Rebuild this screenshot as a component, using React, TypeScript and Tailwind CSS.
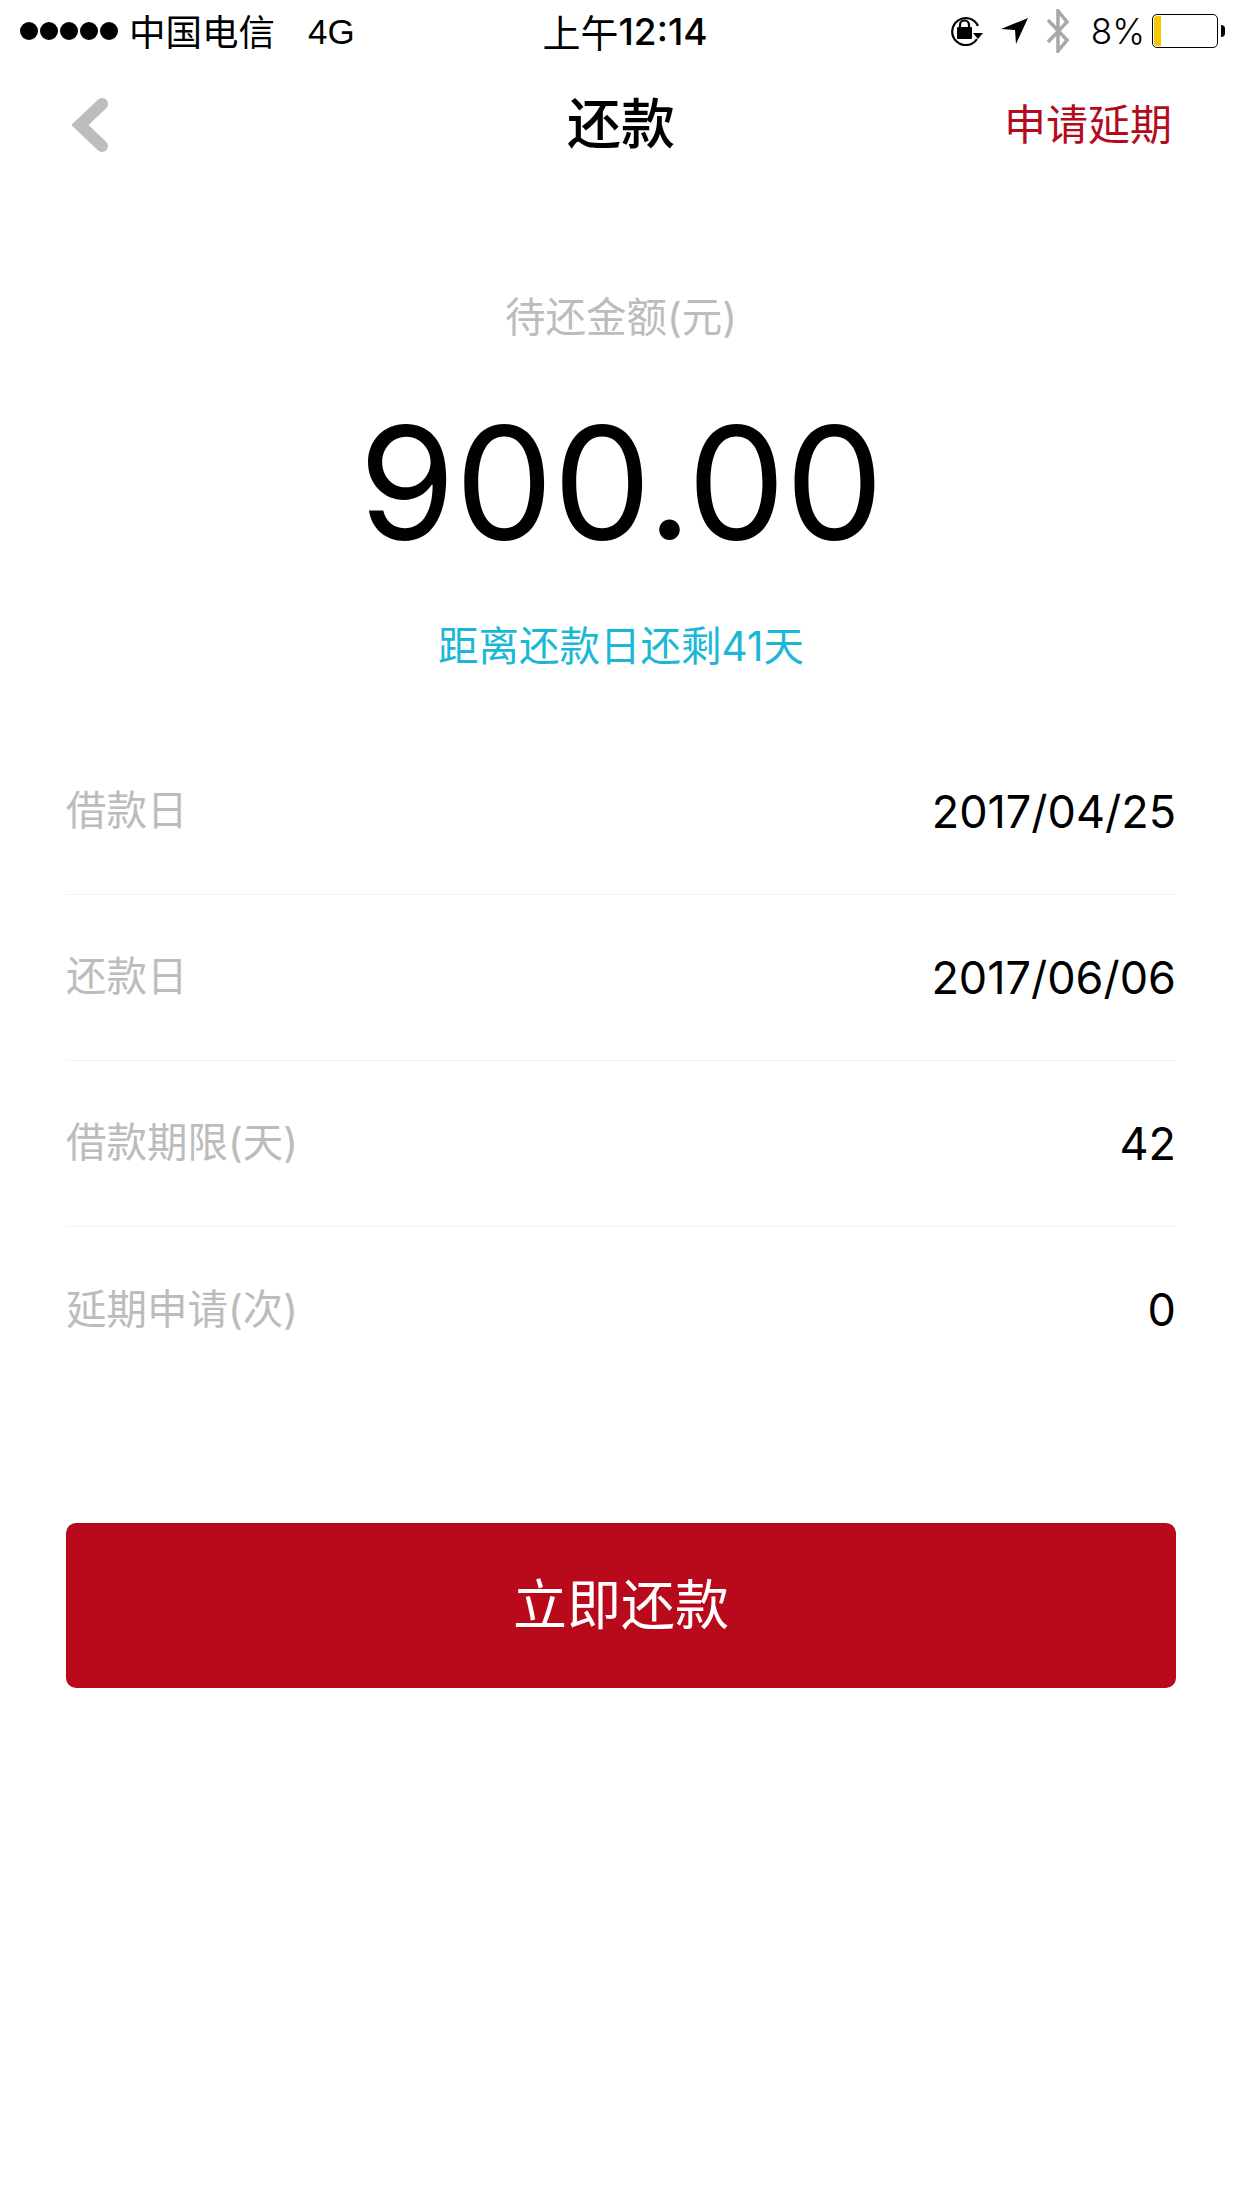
const cjk = "font-['Inter','Noto_Sans_CJK_SC',sans-serif]";

const rows = [
  { label: "借款日", value: "2017/04/25" },
  { label: "还款日", value: "2017/06/06" },
  { label: "借款期限(天)", value: "42" },
  { label: "延期申请(次)", value: "0" },
];

function StatusBar() {
  return (
    <div className="flex h-[62px] items-center justify-between pl-[20px] pr-[17px] text-black">
      <div className="flex w-[400px] items-center">
        <div className="flex gap-[2px]">
          {[0, 1, 2, 3, 4].map((i) => (
            <span key={i} className="h-[18px] w-[18px] rounded-full bg-black" />
          ))}
        </div>
        <span className="ml-[11px] text-[36.5px] leading-none font-['Noto_Sans_CJK_SC',sans-serif]">中国电信</span>
        <span className="ml-[33px] text-[35px] leading-none font-['Liberation_Sans',sans-serif]">4G</span>
      </div>
      <div className="ml-[5px] flex items-center leading-none">
        <span className="text-[38px] font-['Noto_Sans_CJK_SC',sans-serif]">上午</span>
        <span className="text-[37px] font-medium font-['Inter',sans-serif]">12:14</span>
      </div>
      <div className="flex w-[400px] items-center justify-end">
        {/* rotation lock */}
        <svg width="34" height="30" viewBox="0 0 34 30" fill="none">
          <path d="M28 23A13.5 13.5 0 1 1 29 10" stroke="#000" strokeWidth="2.2" />
          <path d="M24 17h10l-5 6z" fill="#000" />
          <rect x="8" y="11" width="15" height="12" rx="1" fill="#000" />
          <path d="M11 12V9a4.5 4.5 0 0 1 9 0v3" stroke="#000" strokeWidth="2.2" />
        </svg>
        {/* location arrow */}
        <svg className="ml-[18px]" width="27" height="26" viewBox="0 0 27 26">
          <path d="M27 0 15 26 14 12 0 11z" fill="#000" />
        </svg>
        {/* bluetooth */}
        <svg className="ml-[18px]" width="24" height="44" viewBox="0 0 24 44" fill="none">
          <path d="M2 11 21 31 12 42V2l9 11L2 33" stroke="#a8a8a8" strokeWidth="3.5" />
        </svg>
        <span className="ml-[21px] text-[35px] leading-none font-['Inter',sans-serif] font-light">8%</span>
        <div className="ml-[7px] h-[34px] w-[66px] rounded-[5px] border-[1.5px] border-black p-px">
          <div className="h-full w-[7px] rounded-l-[3px] bg-[#f7c600]" />
        </div>
        <div className="ml-[3px] h-[12px] w-[4px] rounded-r-full bg-black" />
      </div>
    </div>
  );
}

function NavBar() {
  return (
    <div className="relative flex h-[126px] items-center justify-between pl-[72px] pr-[70px]">
      <svg width="36" height="56" viewBox="0 0 36 56" fill="none">
        <path d="M30 7 8 28l22 21" stroke="#bdbdbd" strokeWidth="12" strokeLinecap="round" strokeLinejoin="miter" />
      </svg>
      <h1 className={`absolute inset-x-0 text-center text-[54px] font-medium leading-none text-black ${cjk}`}>还款</h1>
      <span className={`text-[42px] leading-none text-[#b40a20] ${cjk}`}>申请延期</span>
    </div>
  );
}

export default function App() {
  return (
    <div className={`h-[2208px] w-[1242px] overflow-hidden bg-white ${cjk}`}>
      <StatusBar />
      <NavBar />

      <div className="flex flex-col items-center pt-[110px]">
        <p className="text-[40.5px] leading-none text-[#bcbcbc]">待还金额(元)</p>
        <p className="mt-[47px] text-[156px] font-normal leading-[194px] tracking-[-0.5px] text-black">900.00</p>
        <p className="mt-[47px] text-[40.5px] leading-none text-[#1ab8d6]">距离还款日还剩41天</p>
      </div>

      <div className="mt-[62px] px-[66px]">
        {rows.map((row, i) => (
          <div
            key={row.label}
            className={`flex h-[166px] items-center justify-between ${i < rows.length - 1 ? "border-b border-[#f2f2f2]" : ""}`}
          >
            <span className="text-[40.5px] text-[#bcbcbc]">{row.label}</span>
            <span className="text-[45px] font-normal text-black">{row.value}</span>
          </div>
        ))}
      </div>

      <div className="mt-[130px] px-[66px]">
        <button className="h-[165px] w-full rounded-[10px] bg-[#b90a1c] text-[54px] text-white">立即还款</button>
      </div>
    </div>
  );
}
